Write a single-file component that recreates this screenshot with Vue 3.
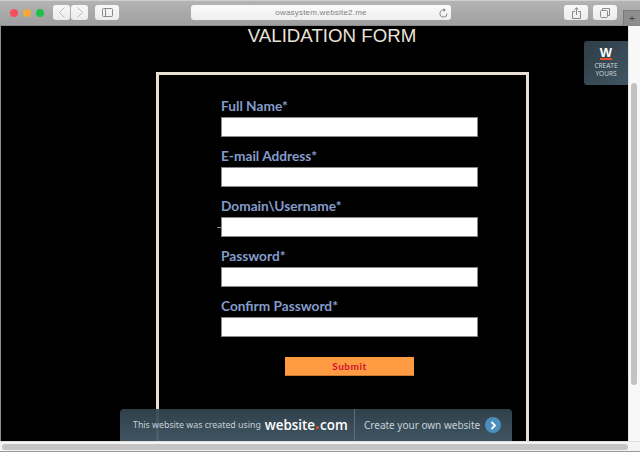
<script setup>
const fields = ['Full Name*', 'E-mail Address*', 'Domain\\Username*', 'Password*', 'Confirm Password*']
</script>

<template>
  <div class="window">
    <header class="toolbar">
      <div class="lights">
        <span class="light red"></span>
        <span class="light yellow"></span>
        <span class="light green"></span>
      </div>
      <div class="nav-group">
        <button class="tool nav">
          <svg width="6" height="11" viewBox="0 0 6 11"><path d="M5.5 .5l-5 5 5 5" fill="none" stroke="#bcbcbc" stroke-width="1" /></svg>
        </button>
        <button class="tool nav">
          <svg width="6" height="11" viewBox="0 0 6 11"><path d="M.5 .5l5 5-5 5" fill="none" stroke="#bcbcbc" stroke-width="1" /></svg>
        </button>
      </div>
      <button class="tool sidebar">
        <svg width="11" height="9" viewBox="0 0 11 9"><rect x="0.5" y="0.5" width="10" height="8" rx="1" fill="none" stroke="#8a8a8a" /><path d="M3.5 1v7" stroke="#8a8a8a" /></svg>
      </button>
      <div class="address">
        <span>owasystem.website2.me</span>
        <svg class="reload" width="9" height="10" viewBox="0 0 9 10"><path d="M8 5.5a3.5 3.5 0 1 1-3-3.4" fill="none" stroke="#888" stroke-width="1" /><path d="M4.5 0v4l2.4-2z" fill="#888" /></svg>
      </div>
      <button class="tool action share">
        <svg width="9" height="12" viewBox="0 0 9 12"><path d="M3 4.5H.5v7h8v-7H6" fill="none" stroke="#8a8a8a" /><path d="M4.5 8V1M2.5 2.6 4.5 .7l2 1.9" fill="none" stroke="#8a8a8a" /></svg>
      </button>
      <button class="tool action tabs">
        <svg width="10" height="10" viewBox="0 0 10 10"><rect x="0.5" y="2.5" width="7" height="7" rx="1" fill="none" stroke="#8a8a8a" /><path d="M2.5 2V.5h7v7H8" fill="none" stroke="#8a8a8a" /></svg>
      </button>
      <div class="new-tab">+</div>
    </header>

    <div class="view">
      <main class="page">
        <h1 class="title">VALIDATION FORM</h1>
        <form class="form-box" @submit.prevent>
          <div v-for="f in fields" :key="f" class="field">
            <label class="label">{{ f }}</label>
            <input class="input" type="text" />
          </div>
          <div class="actions">
            <button class="submit" type="submit">Submit</button>
          </div>
          <span class="tick"></span>
        </form>

        <a class="badge">
          <span class="badge-w">W</span>
          <span class="badge-line"></span>
          <span class="badge-text">CREATE<br />YOURS</span>
        </a>

        <div class="banner">
          <div class="banner-left">
            <span class="banner-note">This website was created using</span>
            <span class="banner-logo">website<i class="dot"></i>com</span>
          </div>
          <div class="banner-right">
            <span class="banner-cta">Create your own website</span>
            <span class="banner-arrow">
              <svg width="7" height="9" viewBox="0 0 7 9"><path d="M1.5 1l3.5 3.5L1.5 8" fill="none" stroke="#fff" stroke-width="1.8" /></svg>
            </span>
          </div>
        </div>
      </main>
      <aside class="vscroll"><span class="vthumb"></span></aside>
    </div>

    <div class="hscroll"><span class="hthumb"></span></div>
  </div>
</template>

<style>
html, body {
  margin: 0;
  background: #000;
}
</style>

<style scoped>
.window {
  width: 640px;
  height: 452px;
  display: flex;
  flex-direction: column;
  overflow: hidden;
  font-family: "Liberation Sans", sans-serif;
}
.toolbar {
  height: 26px;
  flex: none;
  display: flex;
  align-items: center;
  position: relative;
  box-sizing: border-box;
  padding: 0 0 1px 10px;
  background: linear-gradient(#b5b4b5, #a09fa0);
  border-top: 1px solid #cfcfcf;
  border-bottom: 1px solid #8a8a8a;
}
.lights {
  display: flex;
  gap: 5px;
  margin-right: 9px;
}
.light {
  width: 8px;
  height: 8px;
  border-radius: 50%;
}
.red { background: #f4505a; }
.yellow { background: #f5a93a; }
.green { background: #1fbf4a; }
.tool {
  padding: 0;
  height: 15px;
  border: none;
  border-radius: 3px;
  background: linear-gradient(#f8f8f8, #ececec);
  display: flex;
  align-items: center;
  justify-content: center;
}
.nav-group {
  display: flex;
  gap: 1px;
  margin-right: 7px;
}
.nav { width: 17px; }
.sidebar { width: 24px; margin-right: 72px; }
.address {
  width: 260px;
  height: 15px;
  border-radius: 3px;
  background: linear-gradient(#fafafa, #efefef);
  position: relative;
  text-align: center;
  font-size: 8px;
  line-height: 15px;
  color: #808080;
  letter-spacing: 0.2px;
  margin-right: 113px;
}
.reload {
  position: absolute;
  right: 3px;
  top: 3px;
}
.action { width: 24px; }
.share { margin-right: 5px; }
.new-tab {
  position: absolute;
  right: 0;
  top: 9px;
  width: 17px;
  height: 15px;
  box-sizing: border-box;
  background: #8e8e8e;
  border-left: 1px solid #7a7a7a;
  border-top: 1px solid #7a7a7a;
  color: #444;
  font-size: 11px;
  line-height: 15px;
  text-align: center;
}
.view {
  flex: 1;
  min-height: 0;
  display: flex;
}
.page {
  flex: 1;
  position: relative;
  background: #000;
  overflow: hidden;
  border-left: 1px solid #8c8c8c;
}
.title {
  margin: 0;
  width: 662px;
  text-align: center;
  font-size: 18.7px;
  font-weight: 400;
  line-height: 19px;
  color: #ebe3da;
}
.form-box {
  width: 373px;
  height: 420px;
  box-sizing: border-box;
  margin: 27px 0 0 155px;
  border: 3px solid #eadfd4;
  padding: 21px 0 0 62px;
  position: relative;
}
.field {
  height: 50px;
  display: flex;
  flex-direction: column;
}
.label {
  font-family: Lato, sans-serif;
  font-size: 13.7px;
  font-weight: 700;
  line-height: 20px;
  height: 21px;
  color: #849ccb;
}
.input {
  width: 257px;
  height: 20px;
  box-sizing: border-box;
  background: #fff;
  border: 1px solid #888;
  padding: 0;
  border-radius: 0;
  outline: none;
}
.tick {
  position: absolute;
  left: 58px;
  top: 152px;
  width: 4px;
  height: 1px;
  background: #888;
}
.actions {
  padding: 10px 0 0 64px;
}
.submit {
  width: 129px;
  height: 19px;
  padding: 0;
  background: #ff9b42;
  border: none;
  border-bottom: 1px solid #c97a30;
  color: #d3112f;
  font-family: Lato, sans-serif;
  font-size: 10px;
  font-weight: 700;
  letter-spacing: 0.5px;
}
.badge {
  position: absolute;
  top: 15px;
  right: 0;
  width: 44px;
  height: 44px;
  background: linear-gradient(135deg, #2f3d47, #3f5562);
  border-radius: 3px 0 0 3px;
  display: flex;
  flex-direction: column;
  align-items: center;
  color: #d5dadd;
}
.badge-w {
  font-family: "Liberation Sans", sans-serif;
  font-weight: 700;
  font-size: 13px;
  line-height: 10px;
  color: #fff;
  margin-top: 7px;
}
.badge-line {
  width: 12px;
  height: 2px;
  background: #e8502c;
}
.badge-text {
  font-family: "Open Sans", sans-serif;
  font-size: 6.5px;
  line-height: 8px;
  text-align: center;
  margin-top: 2px;
}
.banner {
  position: absolute;
  left: 119px;
  top: 383px;
  width: 392px;
  height: 32px;
  border-radius: 4px 4px 0 0;
  background: linear-gradient(rgba(51, 68, 79, 0.94), rgba(68, 90, 104, 0.94));
  display: flex;
  align-items: center;
  font-family: "Noto Sans", sans-serif;
  color: #c8d0d6;
}
.banner-left {
  width: 235px;
  height: 100%;
  display: flex;
  align-items: center;
  box-sizing: border-box;
  padding-left: 13px;
  border-right: 1px solid #56707f;
}
.banner-note {
  font-size: 8.8px;
  margin-right: 4px;
  white-space: nowrap;
}
.banner-logo {
  font-family: "Open Sans", sans-serif;
  font-size: 13.4px;
  font-weight: 600;
  color: #fff;
  display: flex;
  align-items: center;
  white-space: nowrap;
}
.dot {
  width: 3px;
  height: 3px;
  border-radius: 50%;
  background: #e8502c;
  margin: 4px 1px 0;
}
.banner-right {
  flex: 1;
  display: flex;
  align-items: center;
  padding-left: 9px;
}
.banner-cta {
  font-size: 10px;
  white-space: nowrap;
}
.banner-arrow {
  width: 16px;
  height: 16px;
  border-radius: 50%;
  background: #4a8fbd;
  display: flex;
  align-items: center;
  justify-content: center;
  margin-left: 5px;
}
.vscroll {
  width: 12px;
  flex: none;
  background: #f8f8f8;
  position: relative;
  border-left: 1px solid #e6e6e6;
  box-sizing: border-box;
}
.vthumb {
  position: absolute;
  left: 2px;
  top: 57px;
  width: 6px;
  height: 302px;
  border-radius: 3px;
  background: #c2c2c2;
}
.hscroll {
  height: 11px;
  flex: none;
  background: #f4f4f4;
  border-top: 1px solid #ddd;
  border-bottom: 1px solid #9a9a9a;
  box-sizing: border-box;
  padding: 2px 2px;
}
.hthumb {
  display: block;
  height: 6px;
  width: 626px;
  border-radius: 3px;
  background: #c4c4c4;
}
</style>
